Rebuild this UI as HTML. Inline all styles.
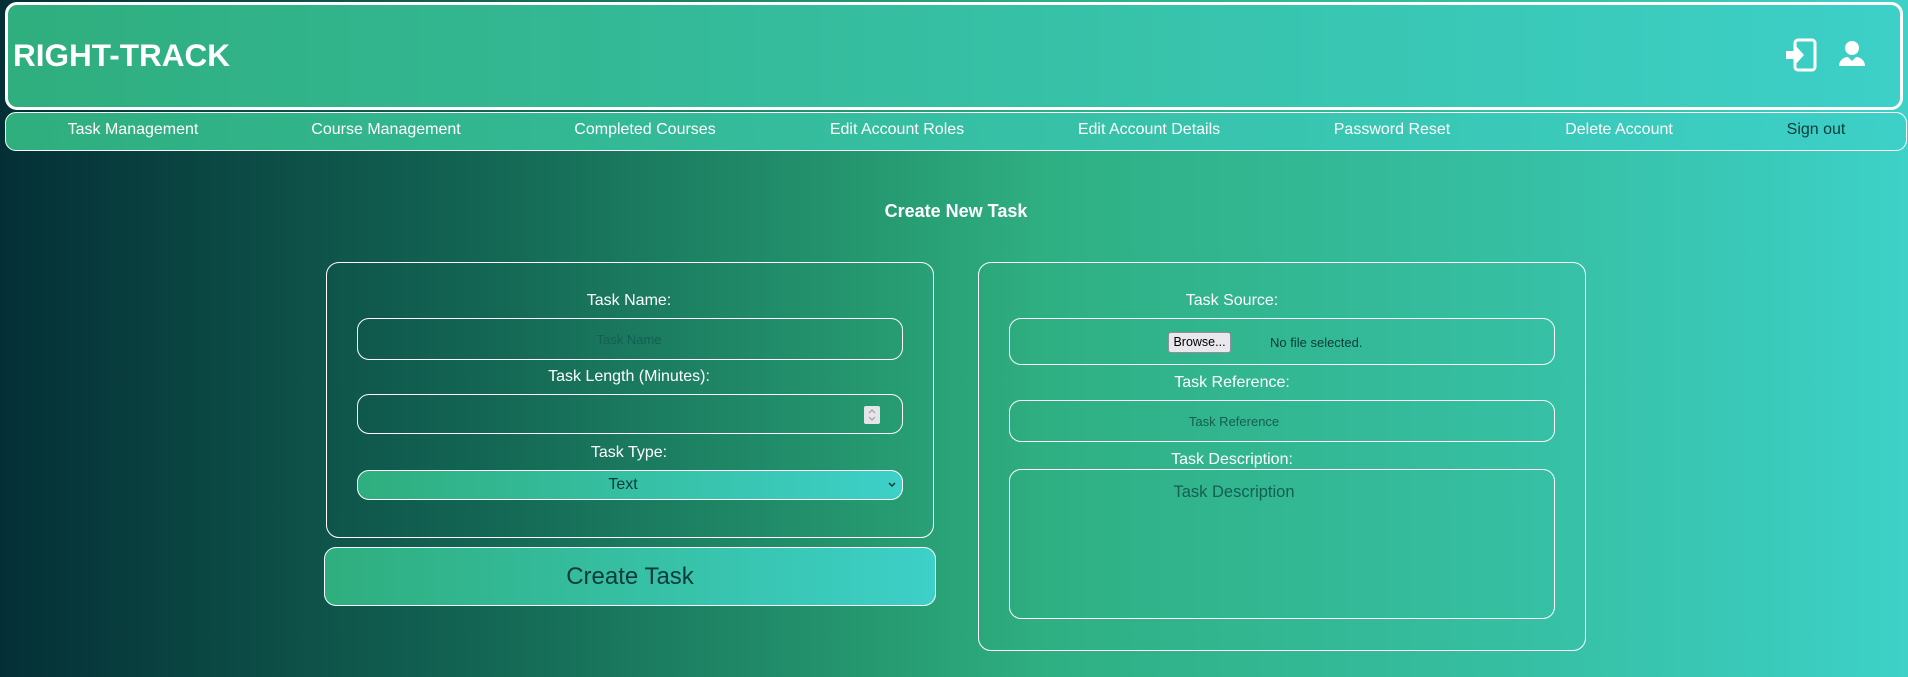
<!DOCTYPE html>
<html><head><meta charset="utf-8"><style>
*{box-sizing:border-box;margin:0;padding:0}
body{width:1908px;height:677px;overflow:hidden;font-family:"Liberation Sans",Arial,sans-serif;background:linear-gradient(90deg,#042f36 0%,#136553 25%,#25976f 45%,#2fb083 55%,#36bfa3 80%,#3dd1c8 100%);position:relative;color:#fff}
.abs{position:absolute}
.hdr{left:5px;top:2px;width:1898px;height:108px;border:3px solid #fff;border-radius:12px;background:linear-gradient(90deg,#2fae7e,#3dd0c8)}
.title{left:13px;top:37px;font-size:31.5px;font-weight:bold}
.nav{left:5px;top:112px;width:1902px;height:39px;border:1px solid #fff;border-radius:11px;background:linear-gradient(90deg,#2fae7e,#3dd0c8)}
.ni{top:121px;font-size:16px;transform:translateX(-50%);white-space:nowrap}
.lbl{font-size:16px;transform:translateX(-50%);white-space:nowrap}
.card{border:1px solid #fff;border-radius:13px}
.inp{border:1px solid #fff;border-radius:12px}
.ph{color:#145e52;transform:translateX(-50%);white-space:nowrap}
</style></head><body>
<div class="abs hdr"></div>
<div class="abs title">RIGHT-TRACK</div>
<svg class="abs" style="left:1784px;top:38px" width="34" height="34" viewBox="0 0 34 34"><rect x="11" y="2" width="20" height="30" rx="3" fill="none" stroke="#fff" stroke-width="3"/><path d="M2 13h9V7l9 10-9 10v-6H2z" fill="#fff"/></svg>
<svg class="abs" style="left:1838px;top:40px" width="28" height="28" viewBox="0 0 28 28"><circle cx="14" cy="8" r="7" fill="#fff"/><path d="M1 26c0-6 5-9 9-9l4 4 4-4c4 0 9 3 9 9z" fill="#fff"/></svg>
<div class="abs nav"></div>
<div class="abs ni" style="left:133px">Task Management</div>
<div class="abs ni" style="left:386px">Course Management</div>
<div class="abs ni" style="left:645px">Completed Courses</div>
<div class="abs ni" style="left:897px">Edit Account Roles</div>
<div class="abs ni" style="left:1149px">Edit Account Details</div>
<div class="abs ni" style="left:1392px">Password Reset</div>
<div class="abs ni" style="left:1619px">Delete Account</div>
<div class="abs ni" style="left:1816px;color:#0b3a3a">Sign out</div>
<div class="abs" style="left:956px;top:201px;transform:translateX(-50%);font-size:18px;font-weight:bold">Create New Task</div>

<div class="abs card" style="left:326px;top:262px;width:608px;height:276px"></div>
<div class="abs lbl" style="left:629px;top:292px">Task Name:</div>
<div class="abs inp" style="left:357px;top:318px;width:546px;height:42px"></div>
<div class="abs ph" style="left:629px;top:332px;font-size:13px">Task Name</div>
<div class="abs lbl" style="left:629px;top:368px">Task Length (Minutes):</div>
<div class="abs inp" style="left:357px;top:394px;width:546px;height:40px"></div>
<div class="abs" style="left:864px;top:406px;width:16px;height:18px;background:#e4e4ea;border-radius:2px"></div>
<svg class="abs" style="left:867px;top:408px" width="10" height="14" viewBox="0 0 10 14"><path d="M2 5l3-3 3 3M2 9l3 3 3-3" fill="none" stroke="#999" stroke-width="1"/></svg>
<div class="abs lbl" style="left:629px;top:444px">Task Type:</div>
<div class="abs inp" style="left:357px;top:470px;width:546px;height:30px;background:linear-gradient(90deg,#2fae7e,#3dd0c8)"></div>
<div class="abs" style="left:623px;top:476px;transform:translateX(-50%);font-size:16px;color:#0b3a3a">Text</div>
<svg class="abs" style="left:888px;top:482px" width="8" height="6" viewBox="0 0 8 6"><path d="M1 1l3 3 3-3" fill="none" stroke="#0b3a3a" stroke-width="1.5"/></svg>
<div class="abs inp" style="left:324px;top:547px;width:612px;height:59px;background:linear-gradient(90deg,#2fae7e,#3dd0c8)"></div>
<div class="abs" style="left:630px;top:563px;transform:translateX(-50%);font-size:24px;color:#0d3b3b">Create Task</div>

<div class="abs card" style="left:978px;top:262px;width:608px;height:389px"></div>
<div class="abs lbl" style="left:1232px;top:292px">Task Source:</div>
<div class="abs inp" style="left:1009px;top:318px;width:546px;height:47px"></div>
<div class="abs" style="left:1168px;top:332px;width:63px;height:21px;background:#e9e9ed;border:1px solid #8f8f9d;border-radius:3px;color:#000;font-size:12.5px;text-align:center;line-height:19px">Browse...</div>
<div class="abs" style="left:1270px;top:335px;font-size:13px;color:#0b3a3a">No file selected.</div>
<div class="abs lbl" style="left:1232px;top:374px">Task Reference:</div>
<div class="abs inp" style="left:1009px;top:400px;width:546px;height:42px"></div>
<div class="abs ph" style="left:1234px;top:414px;font-size:13px">Task Reference</div>
<div class="abs lbl" style="left:1232px;top:451px">Task Description:</div>
<div class="abs inp" style="left:1009px;top:469px;width:546px;height:150px"></div>
<div class="abs ph" style="left:1234px;top:483px;font-size:16.5px">Task Description</div>
</body></html>
